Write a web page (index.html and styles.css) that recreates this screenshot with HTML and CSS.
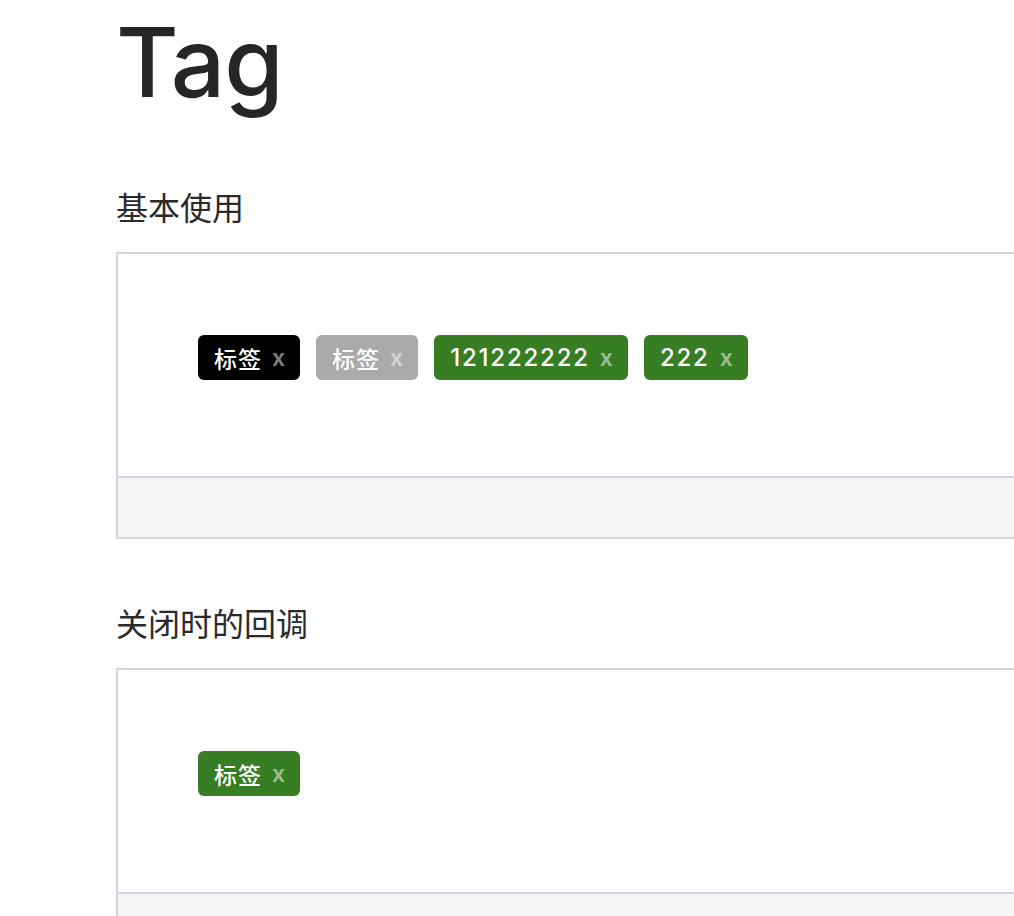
FILE: index.html
```html
<!DOCTYPE html>
<html lang="zh">
<head>
<meta charset="utf-8">
<title>Tag</title>
<link rel="stylesheet" href="styles.css">
</head>
<body>
<main class="page">
  <h1 class="title">Tag</h1>

  <h2 class="section-title first">基本使用</h2>
  <div class="demo">
    <div class="demo-body">
      <span class="tag tag-black"><span class="tag-text">标签</span><span class="tag-close">x</span></span>
      <span class="tag tag-gray"><span class="tag-text">标签</span><span class="tag-close">x</span></span>
      <span class="tag tag-green"><span class="tag-text num">121222222</span><span class="tag-close">x</span></span>
      <span class="tag tag-green"><span class="tag-text num">222</span><span class="tag-close">x</span></span>
    </div>
    <div class="demo-footer"></div>
  </div>

  <h2 class="section-title">关闭时的回调</h2>
  <div class="demo">
    <div class="demo-body">
      <span class="tag tag-green"><span class="tag-text">标签</span><span class="tag-close">x</span></span>
    </div>
    <div class="demo-footer"></div>
  </div>
</main>
</body>
</html>
```

FILE: styles.css
```css
html, body {
  margin: 0;
  padding: 0;
  background: #ffffff;
  overflow: hidden;
}

body {
  font-family: Inter, "Noto Sans CJK SC", sans-serif;
  color: #222222;
}

.page {
  display: flex;
  flex-direction: column;
  align-items: flex-start;
  padding-left: 116px;
}

.title {
  margin: 14px 0 13px;
  font-family: Inter, "Liberation Sans", sans-serif;
  font-size: 96px;
  line-height: 96px;
  font-weight: 500;
  color: #262626;
  letter-spacing: -1px;
}

.section-title {
  margin: 59px 0 22px;
  font-family: "Noto Sans CJK SC", sans-serif;
  font-size: 32px;
  line-height: 48px;
  font-weight: 400;
  color: #2a2a2a;
}

.demo {
  width: 1000px;
  border: 2px solid #d0d4dc;
  box-sizing: border-box;
}

.demo-body {
  display: flex;
  flex-wrap: wrap;
  gap: 16px;
  padding: 81px 80px 96px;
  border-bottom: 2px solid #d0d4dc;
  background: #ffffff;
}

.demo-footer {
  height: 59px;
  background: #f4f5f7;
}

.tag {
  display: inline-flex;
  align-items: center;
  height: 45px;
  padding: 0 15px 0 16px;
  border-radius: 6px;
  color: #ffffff;
  font-family: Inter, "Noto Sans CJK SC", sans-serif;
  font-size: 23px;
  font-weight: 500;
  box-sizing: border-box;
}

.tag-text {
  letter-spacing: 1px;
}

.tag-text.num {
  font-size: 24px;
  letter-spacing: 1.8px;
}

.tag-close {
  margin-left: 10px;
  color: rgba(255, 255, 255, 0.5);
  font-size: 23px;
  font-weight: 600;
}

.tag-black { background: #000000; }
.tag-gray { background: #aaaaaa; }
.tag-green { background: #377d24; }
```
